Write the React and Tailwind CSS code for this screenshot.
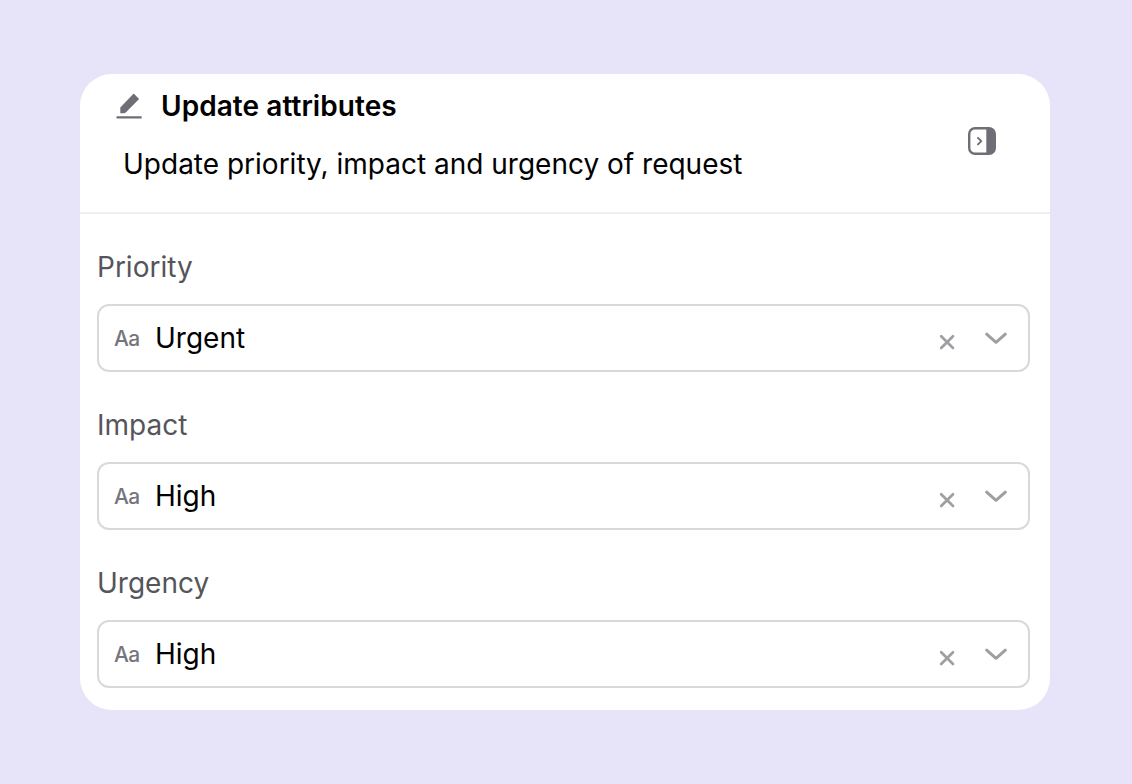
const attributes = [
  { label: "Priority", value: "Urgent" },
  { label: "Impact", value: "High" },
  { label: "Urgency", value: "High" },
];

const PencilIcon = () => (
  <svg className="w-[26px] h-[26px]" viewBox="0 0 26 26" fill="#6f6e76">
    <path d="M4.3 20.3V14.4L17.7.6l5.4 5.4L10 19.2q-1 .9-2.2 1z" />
    <rect x="0.5" y="23.2" width="25.2" height="2.4" rx="0.6" />
  </svg>
);

const PanelIcon = () => (
  <svg className="w-[28px] h-[28px]" viewBox="0 0 28 28" fill="none">
    <rect x="1.2" y="1.2" width="25.6" height="25.6" rx="5.8" stroke="#6f6e76" strokeWidth="2.4" />
    <path d="M18.3 1H21a6 6 0 0 1 6 6v14a6 6 0 0 1-6 6h-2.7z" fill="#6f6e76" />
    <path d="M10 10.8 13.3 14.1 10 17.4" stroke="#6f6e76" strokeWidth="1.9" strokeLinecap="round" strokeLinejoin="round" />
  </svg>
);

const AttributeField = ({ label, value }) => (
  <div>
    <label className="block h-10 text-[28px] leading-10 text-[#55555b]">{label}</label>
    <div className="mt-[17px] flex h-[68px] items-center rounded-xl border-2 border-[#d9d9d9] pl-[15px] pr-[21px]">
      <span className="w-[41px] pt-px text-[21px] font-medium tracking-[-0.6px] text-[#76757c]">Aa</span>
      <span className="flex-1 text-[28px] text-black">{value}</span>
      <svg className="mt-2 mr-[30px] w-4 h-4" viewBox="0 0 16 16" fill="none" stroke="#9f9fa3" strokeWidth="2.7" strokeLinecap="round">
        <path d="M2.2 2.2l11.8 11.8M14 2.2L2.2 14" />
      </svg>
      <svg className="w-[22px] h-3" viewBox="0 0 22 12" fill="none" stroke="#9f9fa3" strokeWidth="3" strokeLinecap="round" strokeLinejoin="round">
        <path d="M1.7 2.2 11 10.3l9.3-8.1" />
      </svg>
    </div>
  </div>
);

const App = () => {
  return (
    <div className="h-[784px] w-[1132px] bg-[#e7e4fa] px-20 pt-[74px] font-['Inter',sans-serif]">
      <div className="h-[636px] w-[970px] rounded-[32px] bg-white">
        <div className="flex h-[140px] justify-between border-b-2 border-[#efefef] pl-9 pr-[54px]">
          <div>
            <div className="mt-3 flex h-10 items-center">
              <PencilIcon />
              <h1 className="ml-[19px] text-[28px] font-semibold tracking-[0.06px] text-black">Update attributes</h1>
            </div>
            <p className="mt-[18px] pl-[7px] text-[28px] leading-10 text-black">
              Update priority, impact and urgency of request
            </p>
          </div>
          <button className="mt-[53px] h-7">
            <PanelIcon />
          </button>
        </div>

        <div className="flex flex-col gap-[33px] pl-[17px] pr-5 pt-[33px]">
          {attributes.map((attr) => (
            <AttributeField key={attr.label} label={attr.label} value={attr.value} />
          ))}
        </div>
      </div>
    </div>
  );
};

export default App;
